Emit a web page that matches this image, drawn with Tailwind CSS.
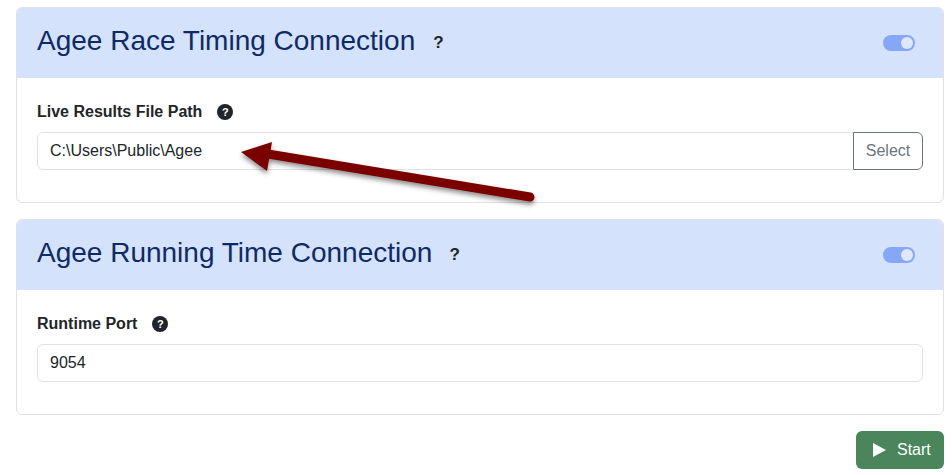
<!DOCTYPE html>
<html lang="en">
  <head>
    <meta charset="UTF-8" />
    <meta name="viewport" content="width=device-width, initial-scale=1.0" />
    <title>Connections</title>
    <script src="https://cdn.jsdelivr.net/npm/@tailwindcss/browser@4"></script>
  </head>
  <body class="relative bg-white h-[475px] overflow-hidden font-['Liberation_Sans',Arial,sans-serif] text-[16px] text-[#212529]">
    <div class="pt-[7px] pl-4 pr-2 flex flex-col gap-4">
      <!-- race timing -->
      <section class="h-[196px] border border-[#dee2e6] rounded-[6px] overflow-hidden">
        <div class="h-[70px] bg-[#d4e2fb] pl-5 pr-7 pb-1 flex items-center justify-between">
          <div class="flex items-center">
            <h2 class="text-[28px] leading-[34px] text-[#0f2a66]">Agee Race Timing Connection</h2>
            <span class="ml-[18px] mt-[4px] text-[17px] font-bold text-[#212529]">?</span>
          </div>
          <div class="mt-1 w-8 h-4 rounded-full bg-[#86a7f5] flex items-center justify-end pr-[2px]">
            <div class="w-3 h-3 rounded-full bg-[#dfe8fb]"></div>
          </div>
        </div>
        <div class="pt-[24px] px-5">
          <div class="flex items-center h-[20px]">
            <label class="font-bold text-[16px]">Live Results File Path</label>
            <span class="ml-[15px] w-4 h-4 rounded-full bg-[#212529] text-white text-[11px] font-bold flex items-center justify-center">?</span>
          </div>
          <div class="mt-[10px] flex h-[38px]">
            <input class="flex-1 min-w-0 border border-[#dee2e6] rounded-l-[6px] px-3 text-[16px] text-[#212529]" value="C:\Users\Public\Agee" />
            <button class="w-[70px] -ml-px border border-[#6c757d] rounded-r-[6px] text-[16px] text-[#6c757d] bg-white">Select</button>
          </div>
        </div>
      </section>
      <!-- running time -->
      <section class="h-[196px] border border-[#dee2e6] rounded-[6px] overflow-hidden">
        <div class="h-[70px] bg-[#d4e2fb] pl-5 pr-7 pb-1 flex items-center justify-between">
          <div class="flex items-center">
            <h2 class="text-[28px] leading-[34px] text-[#0f2a66]">Agee Running Time Connection</h2>
            <span class="ml-[17px] mt-[4px] text-[17px] font-bold text-[#212529]">?</span>
          </div>
          <div class="mt-1 w-8 h-4 rounded-full bg-[#86a7f5] flex items-center justify-end pr-[2px]">
            <div class="w-3 h-3 rounded-full bg-[#dfe8fb]"></div>
          </div>
        </div>
        <div class="pt-[24px] px-5">
          <div class="flex items-center h-[20px]">
            <label class="font-bold text-[16px]">Runtime Port</label>
            <span class="ml-[15px] w-4 h-4 rounded-full bg-[#212529] text-white text-[11px] font-bold flex items-center justify-center">?</span>
          </div>
          <input class="mt-[10px] w-full h-[38px] border border-[#dee2e6] rounded-[6px] px-3 text-[16px] text-[#212529]" value="9054" />
        </div>
      </section>
      <div class="flex justify-end">
        <button class="w-[88px] h-[38px] rounded-[6px] bg-[#4a855c] text-white text-[16px] flex items-center pl-[17px] gap-[11px]">
          <svg width="13" height="14" viewBox="0 0 13 14"><path d="M0 0 L13 7 L0 14 Z" fill="#fff" /></svg>
          Start
        </button>
      </div>
    </div>
    <!-- annotation arrow -->
    <svg class="absolute left-0 top-0" width="952" height="475" viewBox="0 0 952 475">
      <defs>
        <filter id="arrow-shadow" x="-10%" y="-30%" width="120%" height="170%">
          <feDropShadow dx="0" dy="3" stdDeviation="2.5" flood-color="#000" flood-opacity="0.45" />
        </filter>
      </defs>
      <g filter="url(#arrow-shadow)">
        <path d="M530 197 L268 154" stroke="#7a0000" stroke-width="9" stroke-linecap="round" fill="none" />
        <path d="M241 152 L272 142 L267 171 Z" fill="#7a0000" />
      </g>
    </svg>
  </body>
</html>
